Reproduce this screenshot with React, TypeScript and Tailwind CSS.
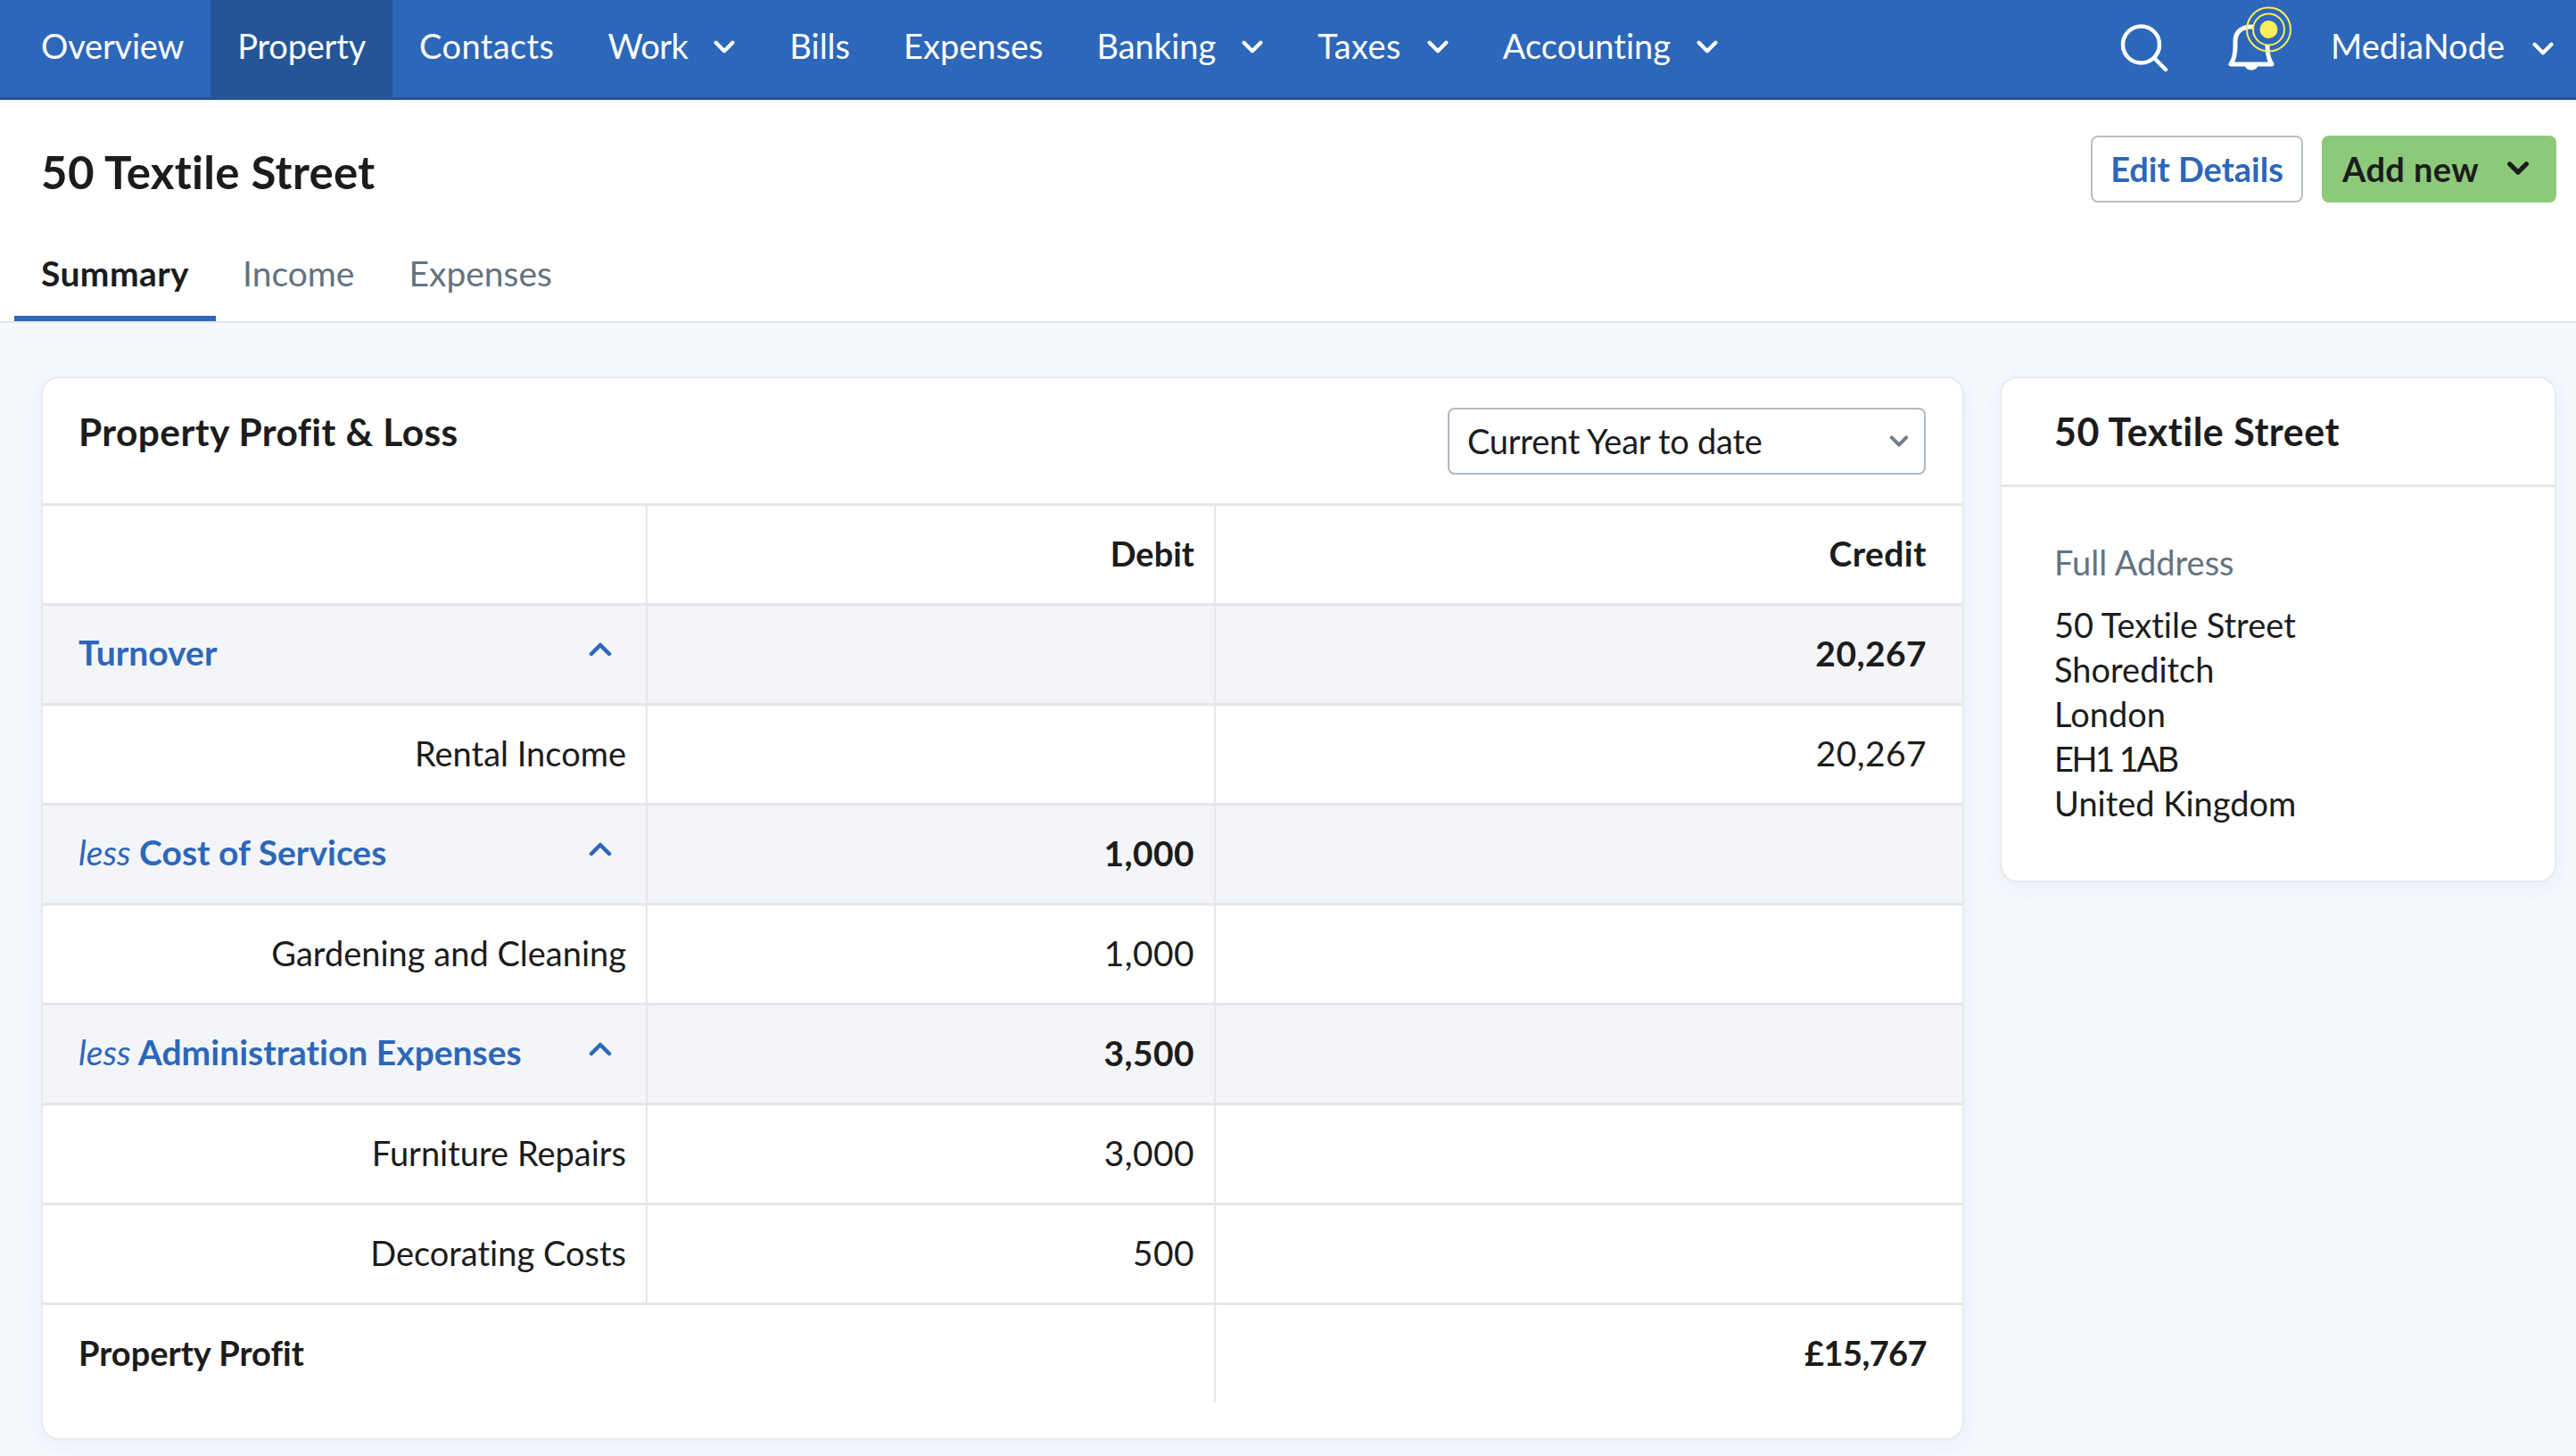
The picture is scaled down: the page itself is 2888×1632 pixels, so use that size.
import React from "react";

function Chevron({ up, className, sw = 4.5 }: { up?: boolean; className: string; sw?: number }) {
  return (
    <svg viewBox="0 0 26 16" className={className} fill="none" stroke="currentColor" strokeWidth={sw} strokeLinecap="round" strokeLinejoin="round">
      {up ? <path d="M3 13 L13 3 L23 13" /> : <path d="M3 3 L13 13 L23 3" />}
    </svg>
  );
}

function NavItem({ label, active, menu, tc = "" }: { label: string; active?: boolean; menu?: boolean; tc?: string }) {
  return (
    <div className={active ? "flex h-full items-center bg-[#235597] px-[30px] pb-[6px]" : "flex h-full items-center px-[30px] pb-[6px]"}>
      <span className={tc}>{label}</span>
      {menu && <Chevron className="ml-[28px] mt-[2px] h-[15px] w-[26px]" />}
    </div>
  );
}

function SearchIcon() {
  return (
    <svg viewBox="0 0 54 54" className="h-[54px] w-[54px]" fill="none" stroke="white" strokeWidth="4.5" strokeLinecap="round">
      <circle cx="23.5" cy="23" r="20.5" />
      <path d="M38 38 L51 51" />
    </svg>
  );
}

function BellIcon() {
  return (
    <svg viewBox="0 0 80 80" className="h-[80px] w-[80px]" fill="none">
      <path d="M4 66 H50 C46 60 45 54 45 46 V40 C45 30 38 24 27 24 C16 24 9 30 9 40 V46 C9 54 8 60 4 66 Z" stroke="white" strokeWidth="5" strokeLinejoin="round" />
      <path d="M20 68 C21 74 33 74 34 68 Z" fill="white" />
      <circle cx="46.5" cy="27" r="17.5" fill="#2d67b9" stroke="#fcee5b" strokeWidth="2" />
      <circle cx="46.5" cy="27" r="24.5" stroke="#fcee5b" strokeWidth="2" />
      <circle cx="46.5" cy="27" r="10" fill="#fcee5b" />
    </svg>
  );
}

type RowProps = {
  label?: React.ReactNode;
  debit?: string;
  credit?: string;
  head?: boolean;
  section?: boolean;
};

function Row({ label, debit, credit, head, section }: RowProps) {
  const bg = section ? "bg-[#f4f5f8] font-bold" : head ? "font-bold" : "";
  return (
    <div className={`grid h-[112px] grid-cols-[676px_637px_839px] border-t-[3px] border-[#e4e6eb] text-[#1c1c1c] ${bg}`}>
      {section ? (
        <div className="flex items-center justify-between pb-[4px] pl-[40px] pr-[38px] text-[39px] text-[#2d67b9]">
          <span>{label}</span>
          <Chevron up className="mb-[8px] h-[16px] w-[26px]" />
        </div>
      ) : (
        <div className="flex items-center justify-end pb-[2px] pr-[22px]">{label}</div>
      )}
      <div className={head ? "flex items-center justify-end border-l-2 border-[#e4e6eb] pb-[2px] pr-[22px]" : "flex items-center justify-end border-l-2 border-[#e4e6eb] pb-[2px] pr-[22px] text-[39px] tracking-[0.4px]"}>{debit}</div>
      <div className="flex items-center justify-end border-l-2 border-[#e4e6eb] pb-[2px] pr-[40px] text-[39px] tracking-[0.4px]">{credit}</div>
    </div>
  );
}

export default function App() {
  return (
    <div className="flex min-h-[1632px] flex-col bg-[#f5f8fd] font-['Lato',sans-serif] text-[38px] text-[#1c1c1c] [font-variant-ligatures:none]">
      <nav className="flex h-[112px] items-center border-b-[3px] border-[#235597] bg-[#2d67b9] pl-4 text-white">
        <NavItem label="Overview" tc="tracking-[-0.2px]" />
        <NavItem label="Property" active tc="tracking-[-0.2px]" />
        <NavItem label="Contacts" tc="tracking-[0.4px]" />
        <NavItem label="Work" menu tc="tracking-[-0.5px]" />
        <NavItem label="Bills" />
        <NavItem label="Expenses" />
        <NavItem label="Banking" menu />
        <NavItem label="Taxes" menu tc="tracking-[0.4px]" />
        <NavItem label="Accounting" menu />
        <div className="ml-auto flex h-full items-center pr-[24px]">
          <div className="mt-[-2px]"><SearchIcon /></div>
          <div className="ml-[66px] mt-[-18px]"><BellIcon /></div>
          <span className="ml-[36px] pb-[6px]">MediaNode</span>
          <Chevron className="ml-[30px] h-[15px] w-[26px]" />
        </div>
      </nav>

      <header className="flex h-[250px] flex-col border-b-2 border-[#e4e6eb] bg-white">
        <div className="flex items-start justify-between pl-[46px] pr-[22px] pt-[40px]">
          <h1 className="mt-[6px] text-[51px] font-bold leading-[70px] tracking-[0.3px]">50 Textile Street</h1>
          <div className="flex gap-[21px]">
            <button className="h-[75px] w-[238px] rounded-[8px] border-2 border-[#b8bfc6] bg-white font-bold text-[#2d67b9]">Edit Details</button>
            <button className="flex h-[75px] w-[263px] items-center justify-between rounded-[8px] bg-[#8cca7a] pl-[23px] pr-[30px] font-bold tracking-[0.4px]">
              Add new
              <Chevron sw={5.5} className="mb-[2px] h-[15px] w-[26px]" />
            </button>
          </div>
        </div>
        <div className="mt-auto flex pl-4 text-[39px] text-[#637381]">
          <div className="w-[226px] border-b-[6px] border-[#2d67b9] pb-[19px] pl-[30px] font-bold tracking-[0.4px] text-[#1c1c1c]">Summary</div>
          <div className="px-[30px] pb-[19px]">Income</div>
          <div className="px-[31px] pb-[19px]">Expenses</div>
        </div>
      </header>

      <main className="flex items-start gap-[40px] pl-[46px] pr-[22px] pt-[60px]">
        <section className="w-[2156px] overflow-hidden rounded-[20px] border-2 border-[#e8eaee] bg-white pb-[40px] shadow-[0_6px_20px_rgba(45,103,185,0.06)]">
          <div className="flex h-[140px] items-start justify-between pl-[40px] pr-[41px]">
            <h2 className="pt-[28px] text-[42.5px] font-bold tracking-[0.4px]">Property Profit &amp; Loss</h2>
            <div className="mt-[33px] flex h-[75px] w-[536px] items-center justify-between rounded-[8px] border-2 border-[#b1b9c0] pl-[20px] pr-[16px]">
              <span className="tracking-[-0.25px]">Current Year to date</span>
              <Chevron sw={5} className="h-[13px] w-[24px] text-[#6f8090]" />
            </div>
          </div>
          <Row head debit="Debit" credit="Credit" />
          <Row section label="Turnover" credit="20,267" />
          <Row label="Rental Income" credit="20,267" />
          <Row section label={<><em className="font-normal">less</em> Cost of Services</>} debit="1,000" />
          <Row label="Gardening and Cleaning" debit="1,000" />
          <Row section label={<><em className="font-normal">less</em> Administration Expenses</>} debit="3,500" />
          <Row label="Furniture Repairs" debit="3,000" />
          <Row label="Decorating Costs" debit="500" />
          <div className="grid h-[112px] grid-cols-[1313px_839px] border-t-[3px] border-[#e4e6eb] font-bold">
            <div className="flex items-center pb-[2px] pl-[40px]">Property Profit</div>
            <div className="flex items-center justify-end border-l-2 border-[#e4e6eb] pb-[2px] pr-[40px] tracking-[-0.6px]">£15,767</div>
          </div>
        </section>

        <aside className="w-[624px] rounded-[20px] border-2 border-[#e8eaee] bg-white shadow-[0_6px_20px_rgba(45,103,185,0.06)]">
          <div className="flex h-[122px] items-start border-b-[3px] border-[#e4e6eb] pl-[59px] pt-[28px]">
            <h2 className="text-[43px] font-bold tracking-[0.5px]">50 Textile Street</h2>
          </div>
          <div className="pb-[62px] pl-[59px] pt-[56px]">
            <div className="mb-[16px] text-[#637381]">Full Address</div>
            <div className="leading-[50px]">
              <div>50 Textile Street</div>
              <div>Shoreditch</div>
              <div>London</div>
              <div className="tracking-[-2.5px]">EH1 1AB</div>
              <div>United Kingdom</div>
            </div>
          </div>
        </aside>
      </main>
    </div>
  );
}
